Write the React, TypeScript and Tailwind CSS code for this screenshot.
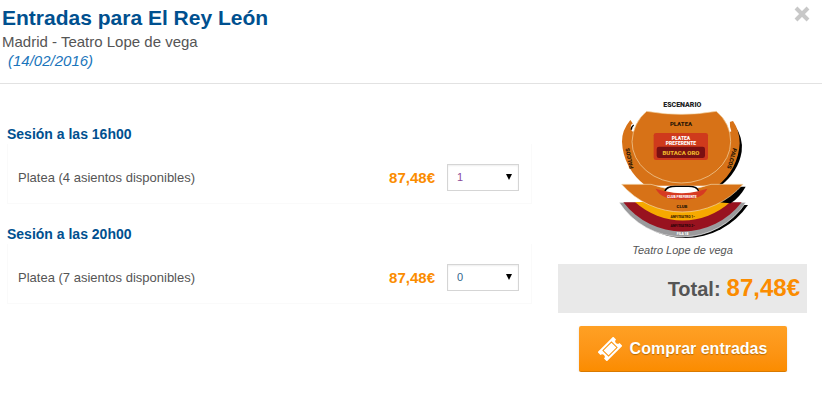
import React from "react";

const sessions = [
  { id: "s16", title: "Sesión a las 16h00", seats: 4, price: "87,48€", qty: 1, color: "text-[#8a4a9a]" },
  { id: "s20", title: "Sesión a las 20h00", seats: 7, price: "87,48€", qty: 0, color: "text-[#33658a]" },
];

const SeatingMap = () => {
  return (
    <svg
      className="w-[164px] h-[150px]"
      viewBox="0 0 492 450"
      role="img"
      aria-label="Plano del teatro"
      fontFamily="Roboto, Liberation Sans, sans-serif"
      fontWeight="900"
      textAnchor="middle"
    >
      {/* palcos */}
      <path d="M400 104 Q428 145 422 185 Q412 245 358 288 L320 288 Z" fill="#000" />
      <path
        d="M88 90 Q62 122 63 155 A177 172 0 0 0 134 287 H350 A177 172 0 0 0 416 160 Q416 122 396 93 L386 96 V124 H93 L96 101 Z"
        fill="#d77217"
      />
      <path d="M93 124 Q86 112 92 102 L98 100 L112 90 L106 124 Z" fill="#fff" />
      <path d="M91 119 Q91 110 98 105" fill="none" stroke="#000" strokeWidth="4" />
      <path d="M378 92 L386 96 Q386 110 391 124 L382 128 Z" fill="#fff" />
      {/* platea */}
      <path
        d="M137 64 Q240 82 346 64 Q389 100 389 155 A148 124 0 0 1 93 155 Q96 98 137 64 Z"
        fill="#d77217"
        stroke="#f3d9ae"
        strokeWidth="2"
      />
      <rect x="158" y="129" width="163" height="81" rx="7" fill="#cf3a1c" />
      <rect x="167" y="170" width="145" height="34" rx="7" fill="#791012" />
      {/* anfiteatros */}
      <path d="M66 345 H441 A227 227 0 0 1 66 345 Z" fill="#000" />
      <path d="M54 337 H435 A227 227 0 0 1 54 337 Z" fill="#9b9b9d" stroke="#fff" strokeWidth="2" />
      <path d="M67 337 H422 A224 224 0 0 1 67 337 Z" fill="#98121f" />
      <path d="M102 336 H388 A213 213 0 0 1 102 336 Z" fill="#f6a900" />
      {/* club */}
      <path d="M414 290 H434 Q416 322 389 340 L350 337 Z" fill="#000" />
      <path
        d="M62 283 H150 Q240 316 330 283 H426 A241 241 0 0 1 62 283 Z"
        fill="#d77217"
        stroke="#f3d9ae"
        strokeWidth="2"
      />
      <path d="M164 296 Q240 320 319 296 Q304 329 242 329 Q180 329 164 296 Z" fill="#d63a22" />
      <path d="M190 303 Q192 287 222 287 H264 Q292 287 294 303 Z" fill="#000" />
      <path d="M194 304 Q200 291 225 291 H262 Q286 291 291 304 Q242 316 194 304 Z" fill="#fff" />
      <text x="244" y="52" fontSize="21" fill="#222">ESCENARIO</text>
      <text x="240" y="109" fontSize="18" fill="#2b1605">PLATEA</text>
      <text x="240" y="151" fontSize="15" fill="#fff">PLATEA</text>
      <text x="240" y="166" fontSize="15" fill="#fff">PREFERENTE</text>
      <text x="240" y="194" fontSize="18" fill="#edb52c">BUTACA ORO</text>
      <text x="243" y="325" fontSize="10" fill="#fff">CLUB PREFERENTE</text>
      <text x="243" y="355" fontSize="13" fill="#2b1605">CLUB</text>
      <text x="245" y="383" fontSize="10" fill="#3a2100">ANFITEATRO 1º</text>
      <text x="245" y="411" fontSize="10" fill="#2a0508">ANFITEATRO 2º</text>
      <text x="245" y="436" fontSize="10" fill="#fff">FILA 18</text>
      <text transform="translate(91 204) rotate(-102)" fontSize="17" fill="#2b1605">PALCOS</text>
      <text transform="translate(387 204) rotate(106)" fontSize="17" fill="#2b1605">PALCOS</text>
    </svg>
  );
};

const TicketIcon = () => {
  return (
    <svg className="w-6 h-6" viewBox="0 0 24 24" aria-hidden="true">
      <g transform="rotate(-45 12 12)">
        <path d="M1 5.5 H23 V9.5 A2.5 2.5 0 0 0 23 14.5 V18.5 H1 V14.5 A2.5 2.5 0 0 0 1 9.5 Z" fill="#fff" />
        <rect x="6" y="8" width="12" height="8" fill="none" stroke="#fb950f" strokeWidth="1" />
      </g>
    </svg>
  );
};

const App = () => {
  return (
    <div className="bg-white font-['Liberation_Sans',Arial,sans-serif] text-[#555]">
      <header className="flex justify-between items-start border-b border-[#e2e2e2] pt-1 pb-[13px] pl-[2px] pr-3">
        <div>
          <h1 className="text-[21px] leading-7 font-bold text-[#00508f]">Entradas para El Rey León</h1>
          <p className="text-[15px] leading-5">Madrid - Teatro Lope de vega</p>
          <p className="text-[15px] leading-[18px] pl-[6px] italic text-[#1a75bb]">(14/02/2016)</p>
        </div>
        <button type="button" aria-label="Cerrar" className="pt-[2px]">
          <svg className="w-4 h-4" viewBox="0 0 16 16">
            <path d="M2 2 L14 14 M14 2 L2 14" stroke="#c8c8c8" strokeWidth="4" />
          </svg>
        </button>
      </header>

      <main className="flex items-start gap-[26px] pl-[7px] pr-[15px]">
        <div className="flex-1 pt-10">
          {sessions.map((s) => (
            <section key={s.id} className="pb-5">
              <h2 className="text-[14px] leading-5 font-bold text-[#00508f]">{s.title}</h2>
              <div className="flex items-center border-x border-b border-[#fafafa] h-[60px] pl-[10px] pr-3 pt-2">
                <label htmlFor={s.id} className="flex-1 text-[13px] leading-5">
                  Platea ({s.seats} asientos disponibles)
                </label>
                <span className="text-[15px] leading-5 font-bold text-[#fb8c00] pr-3">{s.price}</span>
                <div className="relative">
                  <select
                    id={s.id}
                    defaultValue={s.qty}
                    className={`block appearance-none w-[72px] h-[27px] border border-[#d5d5d5] bg-white pl-[9px] text-[11px] shadow-[inset_0_1px_2px_#eee] ${s.color}`}
                  >
                    {Array.from({ length: s.seats + 1 }, (_, n) => (
                      <option key={n}>{n}</option>
                    ))}
                  </select>
                  <svg className="absolute right-[7px] top-[10px] w-[6px] h-[6px] pointer-events-none" viewBox="0 0 6 6">
                    <path d="M0 0 H6 L3 6 Z" fill="#000" />
                  </svg>
                </div>
              </div>
            </section>
          ))}
        </div>

        <aside className="w-[249px] flex flex-col items-center pt-[6px]">
          <SeatingMap />
          <p className="text-[11px] leading-5 italic">Teatro Lope de vega</p>
          <div className="self-stretch mt-1 h-[49px] bg-[#e9e9e9] flex items-baseline justify-end gap-[6px] pr-[7px] pt-2 font-bold">
            <span className="text-[20px] leading-8">Total:</span>
            <span className="text-[24px] leading-8 text-[#fb8c00]">87,48€</span>
          </div>
          <button
            type="button"
            className="mt-[13px] w-[208px] h-[46px] flex items-center justify-center gap-2 rounded-xs border-b border-[#d97a00] bg-linear-to-b from-[#ffa024] to-[#fb8c00] text-white text-[16px] font-bold shadow-sm text-shadow-[0_1px_1px_#b86a00]"
          >
            <TicketIcon />
            Comprar entradas
          </button>
        </aside>
      </main>
    </div>
  );
};

export default App;
